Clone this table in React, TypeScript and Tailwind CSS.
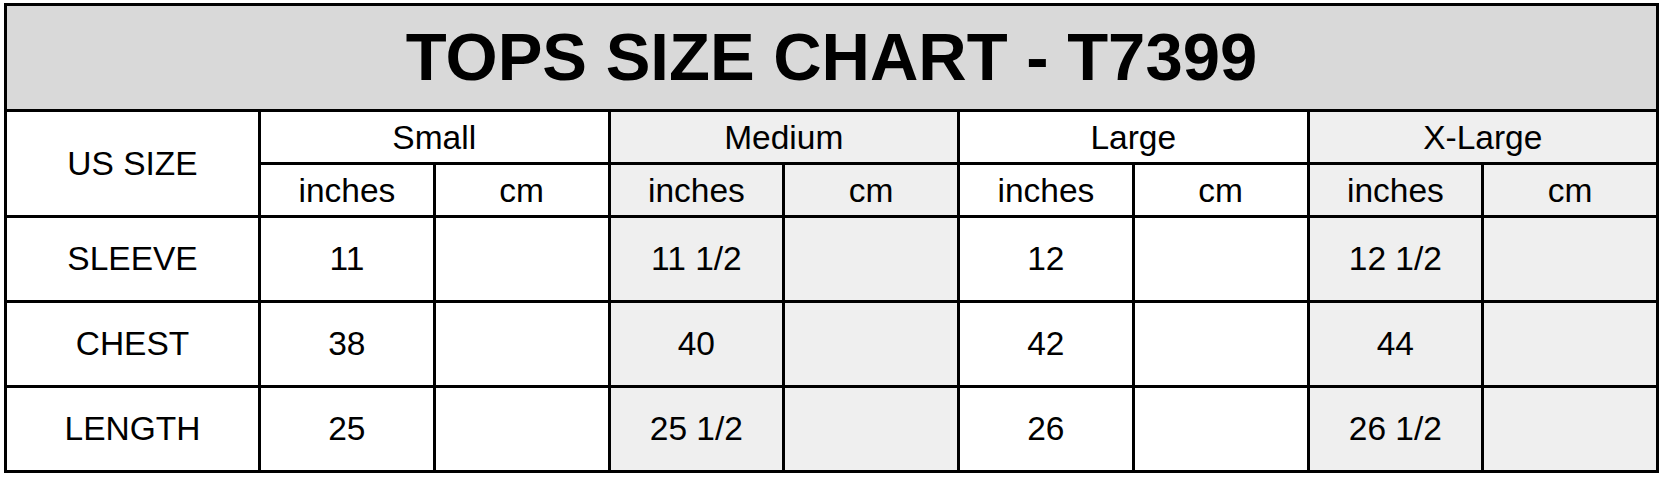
const sizes = ["Small", "Medium", "Large", "X-Large"];

const rows = [
  { label: "SLEEVE", values: ["11", "11 1/2", "12", "12 1/2"] },
  { label: "CHEST", values: ["38", "40", "42", "44"] },
  { label: "LENGTH", values: ["25", "25 1/2", "26", "26 1/2"] },
];

// every other size group gets the light grey fill
const shade = (i: number) => (i % 2 === 1 ? "bg-[#efefef]" : "bg-white");

export default function App() {
  return (
    <div className="w-[1662px] h-[478px] bg-white pt-[3px] pl-[4px] font-['Liberation_Sans',Arial,sans-serif] text-black">
      <div className="w-[1655px] grid grid-cols-[251px_repeat(8,1fr)] grid-rows-[103px_50px_50px_82px_82px_82px] gap-[3px] p-[3px] bg-black text-[33.5px] leading-none">
        <div className="col-span-9 bg-[#d9d9d9] flex items-center justify-center text-[67px] font-bold pb-[2px]">
          TOPS SIZE CHART - T7399
        </div>

        <div className="row-span-2 bg-white flex items-center justify-center">US SIZE</div>
        {sizes.map((s, i) => (
          <div key={s} className={`col-span-2 flex items-center justify-center pt-[2px] ${shade(i)}`}>
            {s}
          </div>
        ))}
        {sizes.map((s, i) => [
          <div key={s + "-in"} className={`flex items-center justify-center pt-[2px] ${shade(i)}`}>
            inches
          </div>,
          <div key={s + "-cm"} className={`flex items-center justify-center pt-[2px] ${shade(i)}`}>
            cm
          </div>,
        ])}

        {rows.map((r) => [
          <div key={r.label} className="bg-white flex items-center justify-center">
            {r.label}
          </div>,
          ...r.values.map((v, i) => [
            <div key={r.label + i + "in"} className={`flex items-center justify-center ${shade(i)}`}>
              {v}
            </div>,
            <div key={r.label + i + "cm"} className={shade(i)}></div>,
          ]),
        ])}
      </div>
    </div>
  );
}
